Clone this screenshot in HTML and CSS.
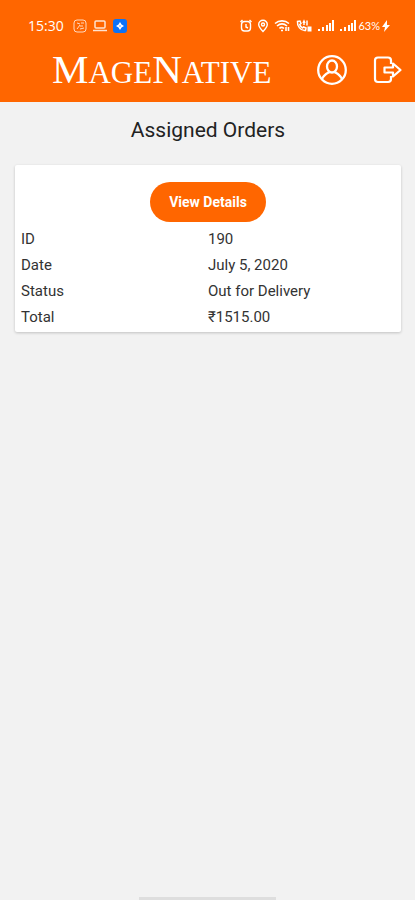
FILE: index.html
```
<!DOCTYPE html>
<html lang="en">
<head>
  <meta charset="utf-8">
  <meta name="viewport" content="width=device-width, initial-scale=1">
  <title>Assigned Orders</title>
  <link rel="stylesheet" href="styles.css">
</head>
<body>
  <header>
    <div class="status-bar">
      <span class="clock">15:30</span>
      <div class="notifications">
        <svg width="14" height="14" viewBox="0 0 14 14" fill="none" stroke="#ffd9c0">
          <rect x="1" y="1" width="12" height="12" rx="3"/>
          <path d="M4 4l3 1M8 4h3M7 6l-3 4M7 7h3M7 10l4-1"/>
        </svg>
        <svg width="14" height="14" viewBox="0 0 14 14" fill="none" stroke="#ffe3d0" stroke-width="1.5">
          <rect x="2" y="2" width="10" height="7" rx="1"/>
          <path d="M0 11.500h14"/>
        </svg>
        <svg width="14" height="14" viewBox="0 0 14 14">
          <rect width="14" height="14" rx="3" fill="#0b72f5"/>
          <path d="M7 3l1.500 2.500L11 7 8.500 8.500 7 11 5.500 8.500 3 7l2.500-1.500z" fill="#fff"/>
          <circle cx="7" cy="7" r="1" fill="#8fc0ff"/>
        </svg>
      </div>
      <div class="system">
        <svg width="12" height="14" viewBox="0 0 12 14" fill="none" stroke="#fff" stroke-width="1.400">
          <rect x="1.500" y="2.500" width="9" height="9.500" rx="3"/>
          <path d="M.500 3l2-2M11.500 3l-2-2M6 5v3l2 1"/>
        </svg>
        <svg width="10" height="14" viewBox="0 0 10 14" fill="none" stroke="#fff" stroke-width="1.400">
          <path d="M5 12.500C2 9.500.700 7.500.700 5.500a4.300 4.300 0 0 1 8.600 0c0 2-1.300 4-4.300 7z"/>
          <circle cx="5" cy="5.500" r="1.500"/>
        </svg>
        <svg width="16" height="14" viewBox="0 0 16 14" fill="none" stroke="#fff" stroke-width="1.600">
          <path d="M1 4.500c4-3.500 10-3.500 14 0M3 7c3-2.500 7-2.500 10 0M5.500 9.500c1-1.200 3-1.200 4.500 0M7 11.500h2M12 8v4M14.500 8v4"/>
        </svg>
        <svg width="16" height="14" viewBox="0 0 16 14" fill="none" stroke="#fff" stroke-width="1.500">
          <path d="M1.500 2.500C1 7 4.500 12 9.500 11.500l.500-2.500-2.500-1-1 1C5 8 4 7 3.700 5.500L5 4.500l-1-2.500zM8 2v4M11 1.500v5M7 4l1-2 1 2"/>
          <rect x="12" y="8" width="3" height="4" fill="#fff" stroke-width="1"/>
        </svg>
        <svg width="16" height="14" viewBox="0 0 16 14" fill="#fff">
          <path d="M0 10h2v2H0zM4 8h2v4H4zM8 6h2v6H8zM11 4h2v8h-2zM14 1h2v11h-2z"/>
        </svg>
        <svg width="16" height="14" viewBox="0 0 16 14" fill="#fff">
          <path d="M0 10h2v2H0zM4 8h2v4H4zM8 6h2v6H8zM11 4h2v8h-2zM14 1h2v11h-2z"/>
        </svg>
        <span class="battery">63%</span>
        <svg class="bolt" width="8" height="12" viewBox="0 0 8 12" fill="#fff">
          <path d="M5 0L0 7h3l-1 5 6-7H5z"/>
        </svg>
      </div>
    </div>
    <div class="app-bar">
      <div class="logo"><span>M</span>AGE<span>N</span>ATIVE</div>
      <button class="icon-button" aria-label="Account">
        <svg width="30" height="30" viewBox="0 0 30 30" fill="none" stroke="#fff" stroke-width="2.300">
          <circle cx="15" cy="15" r="13.800"/>
          <ellipse cx="15" cy="11.500" rx="5" ry="6"/>
          <path d="M5 24.500c1-4 4-5.500 7.500-7.500M25 24.500c-1-4-4-5.500-7.500-7.500"/>
        </svg>
      </button>
      <button class="icon-button" aria-label="Log out">
        <svg width="30" height="30" viewBox="0 0 30 30" fill="none" stroke="#fff" stroke-width="2.200" stroke-linejoin="round">
          <path d="M18 9V5.500q0-3-3-3H5q-3 0-3 3v18.500q0 3 3 3h10q3 0 3-3V21"/>
          <path d="M11.500 12.500H20V8.500l7.500 6.500-7.500 6.500v-4h-8.500z"/>
        </svg>
      </button>
    </div>
  </header>

  <main>
    <h1>Assigned Orders</h1>
    <article class="order">
      <button class="details">View Details</button>
      <table>
        <tr><th scope="row">ID</th><td>190</td></tr>
        <tr><th scope="row">Date</th><td>July 5, 2020</td></tr>
        <tr><th scope="row">Status</th><td>Out for Delivery</td></tr>
        <tr><th scope="row">Total</th><td>₹1515.00</td></tr>
      </table>
    </article>
  </main>

  <div class="home-bar"></div>
</body>
</html>
```
FILE: styles.css
```
* {
  box-sizing: border-box;
}

body {
  margin: 0;
  min-height: 100vh;
  display: flex;
  flex-direction: column;
  background-color: #f2f2f2;
  color: #333;
  font-family: Roboto, sans-serif;
}

svg {
  display: block;
  flex: none;
}

button {
  border: 0;
  padding: 0;
  font-family: inherit;
  cursor: pointer;
}

header {
  background-color: #ff6600;
  color: #fff;
  padding-bottom: 6px;
}

.status-bar {
  display: flex;
  align-items: center;
  padding: 16px 25px 0 28px;
  height: 36px;
}

.clock {
  font-family: "Open Sans", sans-serif;
  font-size: 14px;
  line-height: 20px;
}

.notifications {
  display: flex;
  gap: 6px;
  margin-left: 9px;
}

.system {
  display: flex;
  align-items: center;
  gap: 6px;
  margin-left: auto;
}

.battery {
  font-family: Lato, sans-serif;
  font-size: 11px;
  line-height: 14px;
  margin-left: -4px;
}

.bolt {
  margin-left: -4px;
}

/* MageNative wordmark, drawn as large and small capitals */
.app-bar {
  display: flex;
  align-items: center;
  padding: 8px 12px 0 52px;
}

.logo {
  flex: 1;
  padding-top: 2px;
  font-family: "Liberation Serif", serif;
  font-size: 31px;
  line-height: 46px;
  white-space: nowrap;
}

.logo span {
  font-size: 41px;
}

.icon-button {
  background: none;
  margin-left: 26px;
}

main {
  flex: 1;
  padding: 14px 14px 0 15px;
}

h1 {
  margin: 0 0 21px;
  font-size: 21px;
  font-weight: normal;
  line-height: 28px;
  text-align: center;
  color: #222;
}

.order {
  background-color: #fff;
  border-radius: 2px;
  padding: 17px 6px 2px;
  box-shadow: 0 1px 3px rgba(0, 0, 0, .2);
}

.details {
  display: block;
  margin: 0 auto 4px;
  padding: 0 19px;
  border-radius: 20px;
  background-color: #ff6600;
  color: #fff;
  font-size: 14px;
  font-weight: bold;
  line-height: 40px;
}

table {
  width: 100%;
  table-layout: fixed;
  border-collapse: collapse;
  font-size: 15px;
  line-height: 26px;
}

th,
td {
  padding: 0;
  font-weight: normal;
  text-align: left;
}

.home-bar {
  width: 33%;
  height: 3px;
  margin: 0 auto;
  background-color: #dedede;
}
```
